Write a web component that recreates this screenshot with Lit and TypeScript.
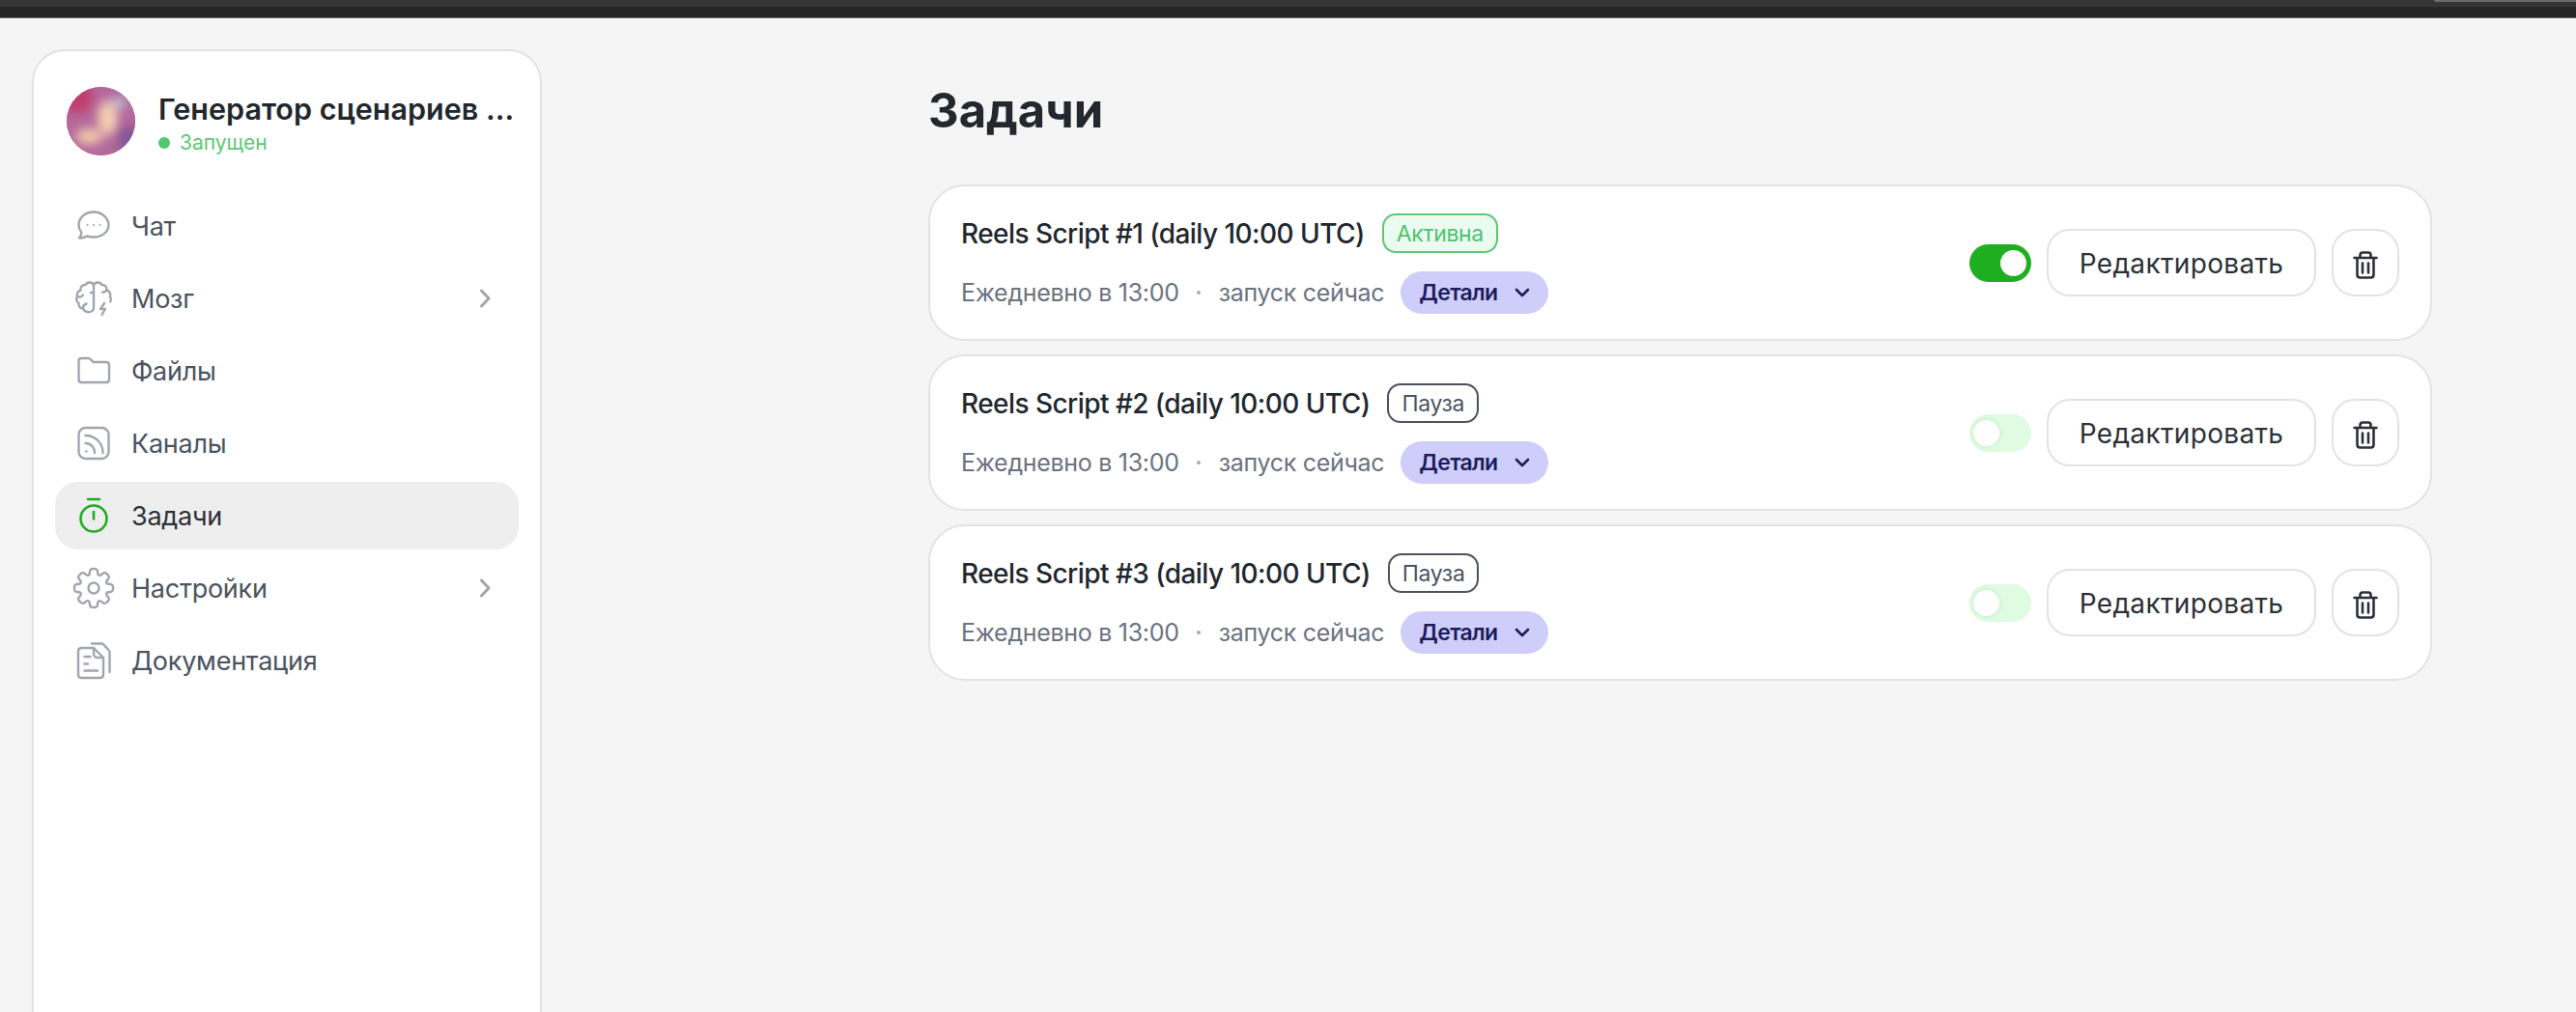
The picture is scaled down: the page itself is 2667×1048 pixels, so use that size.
import { LitElement, html, css, svg } from "lit";
import { customElement } from "lit/decorators.js";

function gearPath(): string {
  const pts: [number, number][] = [];
  const n = 8, ro = 20.5, ri = 14.5, cx = 20, cy = 20;
  for (let i = 0; i < n; i++) {
    const a = (i * 2 * Math.PI) / n - Math.PI / 2;
    const w = 0.2, v = 0.28;
    for (const [r, d] of [[ri, -v], [ro, -w], [ro, w], [ri, v]] as [number, number][]) {
      pts.push([cx + r * Math.cos(a + d), cy + r * Math.sin(a + d)]);
    }
  }
  const mid = (p: [number, number], q: [number, number]) => [(p[0] + q[0]) / 2, (p[1] + q[1]) / 2];
  const m0 = mid(pts[pts.length - 1], pts[0]);
  let d = `M${m0[0].toFixed(2)} ${m0[1].toFixed(2)}`;
  pts.forEach((p, i) => {
    const m = mid(p, pts[(i + 1) % pts.length]);
    d += `Q${p[0].toFixed(2)} ${p[1].toFixed(2)} ${m[0].toFixed(2)} ${m[1].toFixed(2)}`;
  });
  return d + "Z";
}

const icons: Record<string, unknown> = {
  chat: svg`<path d="M20 5.500C11.500 5.500 4.500 11.300 4.500 19c0 3 1.100 5.500 2.800 7.600.2 2-.5 4-2.300 5.900 3.200.1 6-.6 8.200-2 2 .7 4.200 1 6.800 1 8.500 0 15.500-5.500 15.500-12.500S28.500 5.500 20 5.500Z"/><g class="fill"><circle cx="13.500" cy="19" r="1.100"/><circle cx="20" cy="19" r="1.100"/><circle cx="26.500" cy="19" r="1.100"/></g>`,
  brain: svg`<path d="M20 6c-1.500-3-6.500-3.500-8.500 0-3.500-.3-5.500 2.500-5 5.500-3 1-4.500 4-3.500 6.500-1.500 2.500-1 5.500 1.500 7-.5 3 1.500 5.500 4.500 5.500 1.500 3.500 5.500 4.500 8.500 3 1.500-.8 2.500-2 2.500-4V6Z"/><path d="M20 6c1.500-3 6.500-3.500 8.500 0 3.500-.3 5.500 2.500 5 5.500 3 1 4.500 4 3.500 6.500 1 1.800 1 3.800.2 5.400"/><path d="M3.500 18c2 1 4.500.5 5.500-1.500M9 30c0-2.500 1.500-4 3.500-4.500M20 14h-3M33.500 11.500c-1 1.500-2.500 2.300-4.500 2.300"/><path d="M31 25l-4 6h5l-3.500 6"/>`,
  folder: svg`<path d="M4.500 10c0-1.700 1.300-3 3-3h7c1 0 1.700.4 2.300 1.100L19.500 11H33c1.700 0 3 1.300 3 3v15c0 1.700-1.300 3-3 3H7.500c-1.700 0-3-1.300-3-3V10Z"/>`,
  rss: svg`<rect x="4.500" y="4" width="31" height="32" rx="7"/><path d="M11.500 20c5.500 0 9.500 4.500 9.500 10M11.500 12c10.500 0 18 8 18 18"/><circle cx="12.300" cy="28.500" r="1.300" class="fill"/>`,
  timer: svg`<path d="M14 3h12"/><circle cx="20" cy="23" r="13.500"/><path d="M20 16v7.500"/>`,
  gear: svg`<circle cx="20" cy="20" r="5.500"/><path d="${gearPath()}"/>`,
  doc: svg`<path d="M7.500 7H20l10 10v17.500c0 2-1.500 3.500-3.500 3.500h-19C5.500 38 4 36.500 4 34.500v-24C4 8.500 5.500 7 7.500 7Z"/><path d="M20 7v6c0 2 1.500 4 4 4h6"/><path d="M10.500 16h6M10.500 23.500h3.500M10.500 30.500h13.500"/><path d="M18 2.500h10c1 0 1.700.3 2.300 1l5 5.500c.7.7 1.200 1.500 1.200 2.500V32"/>`,
};

@customElement("app-root")
export class AppRoot extends LitElement {
  static styles = css`
    :host { display: flex; flex-direction: column; height: 1048px; overflow: hidden; background: #f5f5f5; font-family: Inter, "Noto Sans", sans-serif; color: #22272e; }
    .chrome { height: 18px; flex: none; background: linear-gradient(#353535 0 7px, #262626 7px); border-bottom: 1px solid #6e6e6e; position: relative; }
    .chrome i { position: absolute; right: 0; top: 0; width: 147px; height: 2px; background: #6a6a6a; border-bottom-left-radius: 6px; }
    .page { flex: 1; display: flex; align-items: stretch; padding: 32px 0 0 33px; min-height: 0; }
    .side { width: 528px; box-sizing: border-box; flex: none; background: #fff; border: 2px solid #e2e2e2; border-bottom: 0; border-radius: 34px 34px 0 0; padding: 36px 22px 0; margin-bottom: -40px; }
    .head { display: flex; align-items: center; gap: 24px; padding-left: 12px; height: 72px; margin-bottom: 38px; }
    .avatar { width: 71px; height: 71px; flex: none; border-radius: 50%; overflow: hidden; position: relative; background: #a9659a; }
    .avatar::before { content: ""; position: absolute; inset: -8px; filter: blur(5px); background:
      radial-gradient(ellipse 13px 22px at 58% 46%, #f2cdb0 0 60%, transparent 100%),
      radial-gradient(ellipse 18px 11px at 36% 68%, #eec3ac 0 55%, transparent 100%),
      radial-gradient(ellipse 11px 9px at 72% 28%, #b6b9d6 0 40%, transparent 100%),
      radial-gradient(ellipse 20px 20px at 22% 22%, #c23d6e 0 60%, transparent 100%),
      radial-gradient(ellipse 16px 18px at 84% 72%, #7f5796 0 50%, transparent 100%),
      #b4699b; }
    .htext { min-width: 0; flex: 1; display: flex; flex-direction: column; gap: 2px; padding-top: 5px; }
    .name { font-size: 30.500px; font-weight: 600; line-height: 38px; white-space: nowrap; color: #22272e; }
    .status { font-size: 21px; line-height: 27px; color: #5cc878; display: flex; align-items: center; gap: 10px; }
    .status b { width: 12px; height: 12px; border-radius: 50%; background: #4fc871; }
    nav { display: flex; flex-direction: column; gap: 5px; }
    .item { height: 70px; display: flex; align-items: center; padding: 0 29px 0 20px; border-radius: 24px; font-size: 27px; letter-spacing: -.25px; color: #4b5360; gap: 19px; }
    .item.active { background: #eeeeee; color: #2c3038; }
    .item svg.ic { width: 40px; height: 40px; flex: none; fill: none; overflow: visible; stroke: #a0a6ae; stroke-width: 2.400; stroke-linecap: round; stroke-linejoin: round; }
    .item.active svg.ic { stroke: #22ad22; stroke-width: 2.600; }
    .item svg .fill { fill: #a0a6ae; stroke: none; }
    .item span { flex: 1; }
    .item svg.chev { width: 12px; height: 20px; flex: none; fill: none; stroke: #a0a6ae; stroke-width: 3; stroke-linecap: round; stroke-linejoin: round; }
    main { flex: none; margin-left: 400px; width: 1557px; padding-top: 24px; }
    h1 { margin: 0 0 37px; font-size: 49px; font-weight: 700; line-height: 79px; color: #22282e; }
    .cards { display: flex; flex-direction: column; gap: 14px; }
    .card { height: 162px; box-sizing: border-box; background: #fff; border: 2px solid #e3e3e3; border-radius: 38px; display: flex; align-items: center; padding: 0 32px; }
    .info { flex: 1; display: flex; flex-direction: column; gap: 19px; padding-top: 2px; }
    .row1 { display: flex; align-items: center; gap: 18px; height: 41px; }
    .title { font-size: 28px; font-weight: 500; color: #22272e; letter-spacing: -.55px; }
    .badge { height: 41px; box-sizing: border-box; display: flex; align-items: center; padding: 0 13px; border-radius: 14px; font-size: 23px; letter-spacing: -.35px; border: 2px solid #5cc878; background: #ecfbef; color: #4fc26f; }
    .badge.off { border-color: #4b5360; background: #fff; color: #4b5360; }
    .row2 { display: flex; align-items: center; font-size: 25px; letter-spacing: -.3px; color: #6b7280; height: 44px; }
    .dot { width: 4px; height: 4px; border-radius: 50%; background: #a5abb3; margin: 0 19px 0 18px; }
    .pill { margin-left: 17px; height: 44px; box-sizing: border-box; padding: 0 18px 0 19px; border-radius: 22px; background: #cfcefb; color: #1f1c5c; font-size: 23px; letter-spacing: -.7px; font-weight: 600; display: flex; align-items: center; gap: 17px; }
    .pill svg { width: 18px; height: 12px; fill: none; stroke: #1f1c5c; stroke-width: 2.600; stroke-linecap: round; stroke-linejoin: round; }
    .actions { display: flex; align-items: center; gap: 16px; }
    .toggle { width: 64px; height: 39px; border-radius: 20px; background: #1fae1f; display: flex; align-items: center; justify-content: flex-end; padding: 0 5px; box-sizing: border-box; }
    .toggle i { width: 27px; height: 27px; border-radius: 50%; background: #fff; }
    .toggle.off { background: #dffbe1; justify-content: flex-start; padding: 0 4px; }
    .toggle.off i { box-shadow: 0 0 5px #bfe9c4; }
    .btn { height: 70px; box-sizing: border-box; background: #fff; border: 2px solid #e3e3e3; border-radius: 24px; display: flex; align-items: center; justify-content: center; padding-top: 2px; font-size: 28px; color: #2c3038; letter-spacing: .35px; }
    .edit { width: 279px; }
    .del { width: 70px; }
    .del svg { width: 28px; height: 30px; margin-top: 3px; fill: none; stroke: #2c3038; stroke-width: 2.600; stroke-linecap: round; stroke-linejoin: round; }
  `;

  private nav = [
    { k: "chat", t: "Чат" },
    { k: "brain", t: "Мозг", c: true },
    { k: "folder", t: "Файлы" },
    { k: "rss", t: "Каналы" },
    { k: "timer", t: "Задачи", a: true },
    { k: "gear", t: "Настройки", c: true },
    { k: "doc", t: "Документация" },
  ];

  private tasks = [
    { t: "Reels Script #1 (daily 10:00 UTC)", on: true },
    { t: "Reels Script #2 (daily 10:00 UTC)", on: false },
    { t: "Reels Script #3 (daily 10:00 UTC)", on: false },
  ];

  render() {
    return html`
      <div class="chrome"><i></i></div>
      <div class="page">
        <aside class="side">
          <div class="head">
            <div class="avatar"></div>
            <div class="htext">
              <div class="name">Генератор сценариев ...</div>
              <div class="status"><b></b>Запущен</div>
            </div>
          </div>
          <nav>
            ${this.nav.map(n => html`
              <div class="item ${n.a ? "active" : ""}">
                <svg class="ic" viewBox="0 0 40 40">${icons[n.k]}</svg>
                <span>${n.t}</span>
                ${n.c ? html`<svg class="chev" viewBox="0 0 12 20"><path d="M2.500 2l7.500 8-7.500 8"/></svg>` : ""}
              </div>`)}
          </nav>
        </aside>
        <main>
          <h1>Задачи</h1>
          <div class="cards">
            ${this.tasks.map(t => html`
              <div class="card">
                <div class="info">
                  <div class="row1">
                    <span class="title">${t.t}</span>
                    <span class="badge ${t.on ? "" : "off"}">${t.on ? "Активна" : "Пауза"}</span>
                  </div>
                  <div class="row2">
                    <span>Ежедневно в 13:00</span><i class="dot"></i><span>запуск сейчас</span>
                    <span class="pill">Детали<svg viewBox="0 0 18 12"><path d="M3 3l6 6 6-6"/></svg></span>
                  </div>
                </div>
                <div class="actions">
                  <div class="toggle ${t.on ? "" : "off"}"><i></i></div>
                  <div class="btn edit">Редактировать</div>
                  <div class="btn del"><svg viewBox="0 0 28 30"><path d="M2.500 7h23M8.500 7V4c0-1.400 1-2.500 2.500-2.500h6c1.500 0 2.500 1.100 2.500 2.500v3M5.500 7v17.500c0 1.700 1.300 3 3 3h11c1.700 0 3-1.300 3-3V7M11 12.500v10M17 12.500v10"/></svg></div>
                </div>
              </div>`)}
          </div>
        </main>
      </div>
    `;
  }
}
